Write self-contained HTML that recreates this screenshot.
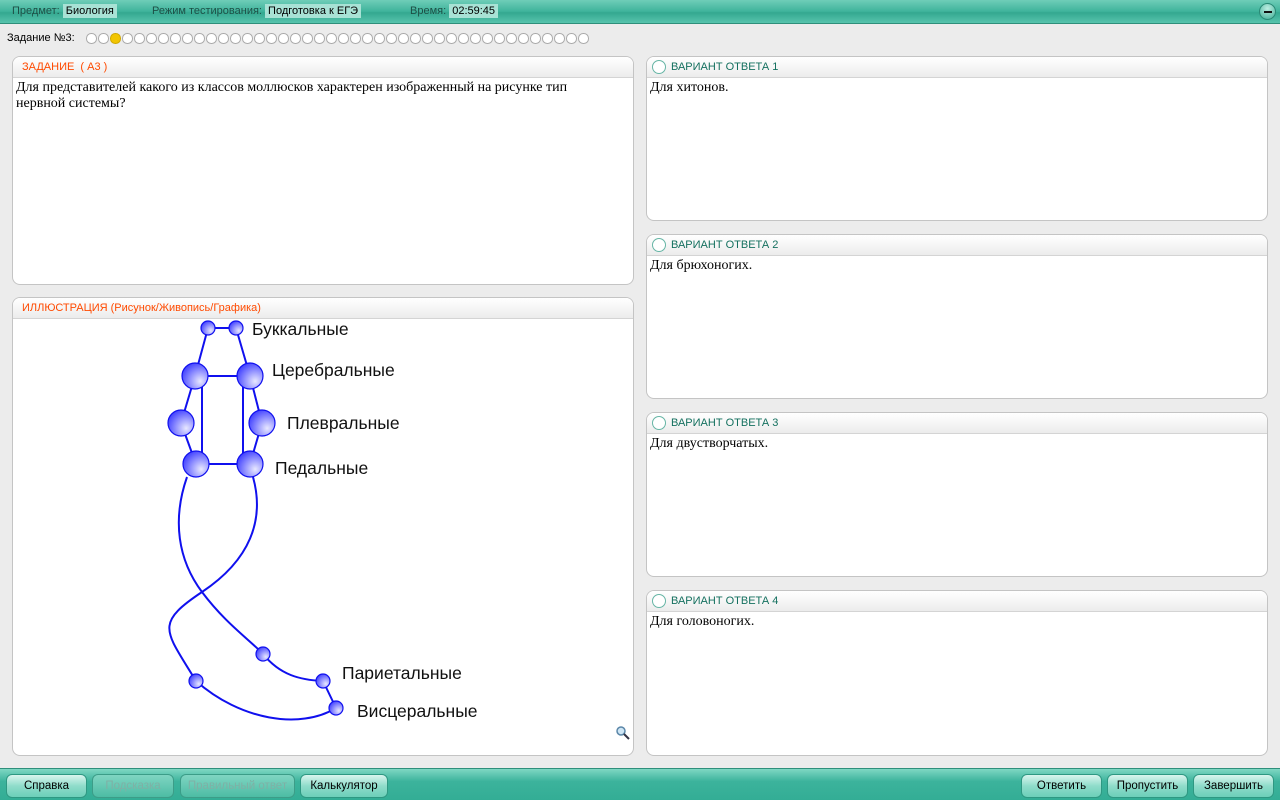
<!DOCTYPE html>
<html><head><meta charset="utf-8"><style>
*{box-sizing:border-box;margin:0;padding:0}
body{width:1280px;height:800px;background:#ececec;font-family:"Liberation Sans",sans-serif;position:relative;overflow:hidden}
.top{position:absolute;left:0;top:0;width:1280px;height:24px;background:linear-gradient(#6fcdb8,#3fb39b 50%,#34a890 55%,#58c4ad);border-bottom:1px solid #2f8f7b;font-size:11px;color:#1d4f46}
.top span{position:absolute;top:5px}
.top b{font-weight:normal;color:#000;background:#a8e2d5;padding:1px 3px}
.min{position:absolute;right:4px;top:3px;width:17px;height:17px;border-radius:50%;background:radial-gradient(circle at 50% 30%,#bdeee2,#3fae96);border:1px solid #2a8a76}
.min:after{content:"";position:absolute;left:4px;top:7px;width:8px;height:2px;background:#111}
.nav{position:absolute;left:7px;top:32px;font-size:11px;color:#000}
.dots{position:absolute;left:86px;top:33px;display:flex}
.dots i{width:10.5px;height:10.5px;border:1px solid #aaa;border-radius:50%;margin-right:1.5px;background:#fff}
.dots i.y{background:#f2c500;border-color:#d0a800}
.p{position:absolute;background:#fff;border:1px solid #c4c4c4;border-radius:8px;overflow:hidden}
.h{height:21px;background:linear-gradient(#fff,#ececec);border-bottom:1px solid #d4d4d4;font-size:11px;padding:4px 9px;color:#ff4a00}
.r .h{color:#14705f;padding-left:24px;position:relative}
.r .h:before{content:"";position:absolute;left:5px;top:3px;width:12px;height:12px;border:1px solid #66b5a5;border-radius:50%;background:#fff}
.t{font-family:"Liberation Serif",serif;font-size:14px;padding:2px 3px;line-height:16px;color:#000}
.bot{position:absolute;left:0;top:768px;width:1280px;height:32px;background:linear-gradient(#7fd7c3,#3cb39c 40%,#33ad95);border-top:1px solid #2f8f7b}
.b{position:absolute;top:5px;height:24px;border-radius:6px;border:1px solid #2e9882;background:linear-gradient(#d9f5ee,#8fdcca 50%,#6ccfb9);font-size:11.5px;text-align:center;line-height:22px;color:#000}
.b.d{background:linear-gradient(#7fd5c2,#4dbca4);color:#7fb0a5;border-color:#3c9d88}
</style></head><body>
<div class="top">
<span style="left:12px">Предмет: <b>Биология</b></span>
<span style="left:152px">Режим тестирования: <b>Подготовка к ЕГЭ</b></span>
<span style="left:410px">Время: <b>02:59:45</b></span>
<div class="min"></div>
</div>
<div class="nav">Задание №3:</div>
<div class="dots"><i></i><i></i><i class="y"></i><i></i><i></i><i></i><i></i><i></i><i></i><i></i><i></i><i></i><i></i><i></i><i></i><i></i><i></i><i></i><i></i><i></i><i></i><i></i><i></i><i></i><i></i><i></i><i></i><i></i><i></i><i></i><i></i><i></i><i></i><i></i><i></i><i></i><i></i><i></i><i></i><i></i><i></i><i></i></div>

<div class="p" style="left:12px;top:56px;width:622px;height:229px"><div class="h">ЗАДАНИЕ &nbsp;( A3 )</div><div class="t">Для представителей какого из классов моллюсков характерен изображенный на рисунке тип<br>нервной системы?</div></div>

<div class="p" style="left:12px;top:297px;width:622px;height:459px"><div class="h">ИЛЛЮСТРАЦИЯ (Рисунок/Живопись/Графика)</div></div>

<svg style="position:absolute;left:0;top:0" width="640" height="760">
<defs><radialGradient id="g" cx="0.7" cy="0.7" r="0.8"><stop offset="0" stop-color="#e8e8ff"/><stop offset="1" stop-color="#3a3aff"/></radialGradient></defs>
<g stroke="#1010ee" stroke-width="2" fill="none">
<line x1="208" y1="328" x2="236" y2="328"/><line x1="208" y1="328" x2="195" y2="376"/><line x1="236" y1="328" x2="250" y2="376"/>
<line x1="195" y1="376" x2="250" y2="376"/><line x1="196" y1="464" x2="250" y2="464"/>
<line x1="202" y1="376" x2="202" y2="464"/><line x1="243" y1="376" x2="243" y2="464"/>
<line x1="195" y1="376" x2="181" y2="423"/><line x1="181" y1="423" x2="196" y2="464"/>
<line x1="250" y1="376" x2="262" y2="423"/><line x1="262" y1="423" x2="250" y2="464"/>
<path d="M187 477 C172 520,178 560,202 592 S250 640,263 654"/>
<path d="M253 477 C265 520,250 560,202 592 S165 630,196 681"/>
<path d="M196 681 C240 720,300 730,336 708"/>
<path d="M263 654 C280 675,300 680,323 681 L336 708"/>
</g>
<g fill="url(#g)" stroke="#1010ee" stroke-width="1.2">
<circle cx="208" cy="328" r="7"/><circle cx="236" cy="328" r="7"/>
<circle cx="195" cy="376" r="13"/><circle cx="250" cy="376" r="13"/>
<circle cx="181" cy="423" r="13"/><circle cx="262" cy="423" r="13"/>
<circle cx="196" cy="464" r="13"/><circle cx="250" cy="464" r="13"/>
<circle cx="263" cy="654" r="7"/><circle cx="196" cy="681" r="7"/><circle cx="323" cy="681" r="7"/><circle cx="336" cy="708" r="7"/>
</g>
<g font-family="Liberation Sans" font-size="17.5" fill="#111">
<text x="252" y="335">Буккальные</text><text x="272" y="376">Церебральные</text><text x="287" y="429">Плевральные</text><text x="275" y="474">Педальные</text><text x="342" y="679">Париетальные</text><text x="357" y="717">Висцеральные</text>
</g>
<circle cx="621" cy="731" r="4" fill="#cfe6f5" stroke="#5a86a8" stroke-width="1.5"/><line x1="624" y1="734" x2="629" y2="739" stroke="#334" stroke-width="2"/>
</svg>

<div class="p r" style="left:646px;top:56px;width:622px;height:165px"><div class="h">ВАРИАНТ ОТВЕТА 1</div><div class="t">Для хитонов.</div></div>
<div class="p r" style="left:646px;top:234px;width:622px;height:165px"><div class="h">ВАРИАНТ ОТВЕТА 2</div><div class="t">Для брюхоногих.</div></div>
<div class="p r" style="left:646px;top:412px;width:622px;height:165px"><div class="h">ВАРИАНТ ОТВЕТА 3</div><div class="t">Для двустворчатых.</div></div>
<div class="p r" style="left:646px;top:590px;width:622px;height:166px"><div class="h">ВАРИАНТ ОТВЕТА 4</div><div class="t">Для головоногих.</div></div>

<div class="bot">
<div class="b" style="left:6px;width:81px">Справка</div>
<div class="b d" style="left:92px;width:82px">Подсказка</div>
<div class="b d" style="left:180px;width:115px">Правильный ответ</div>
<div class="b" style="left:300px;width:88px">Калькулятор</div>
<div class="b" style="left:1021px;width:81px">Ответить</div>
<div class="b" style="left:1107px;width:81px">Пропустить</div>
<div class="b" style="left:1193px;width:81px">Завершить</div>
</div>
</body></html>
